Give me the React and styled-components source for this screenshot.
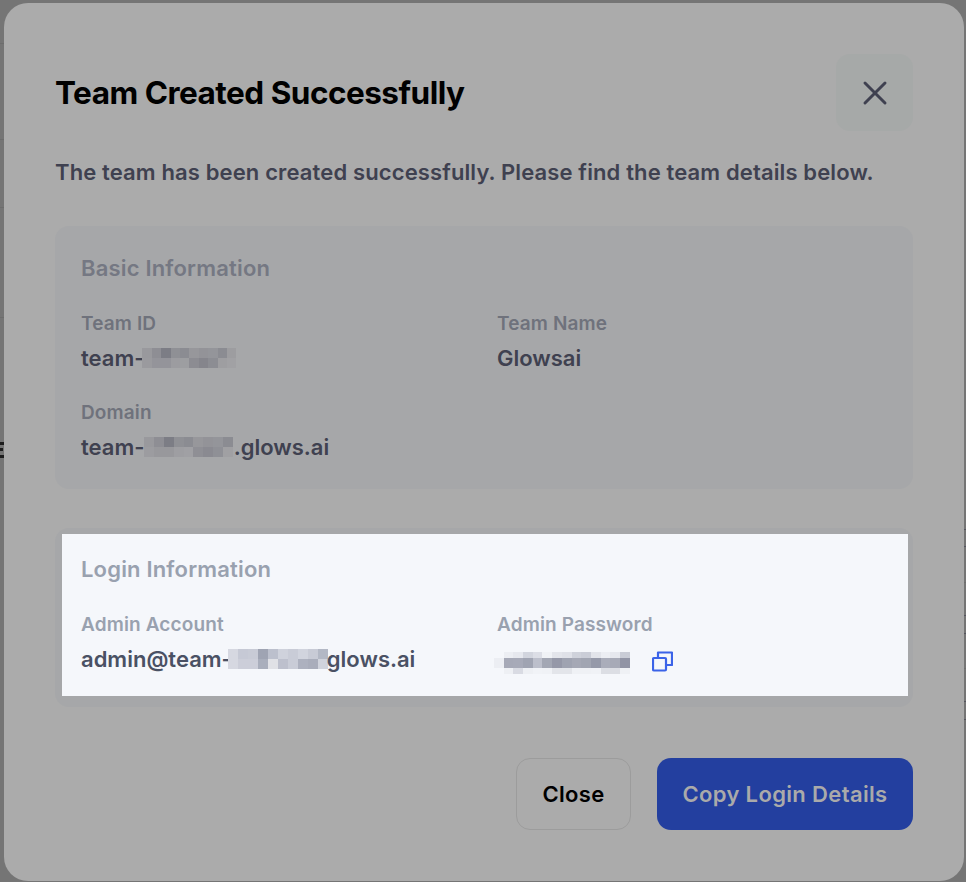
import React from "react";
import styled, { createGlobalStyle } from "styled-components";
import { X } from "lucide-react";

const GlobalStyle = createGlobalStyle`
  html, body {
    margin: 0;
    padding: 0;
    background: #757575;
  }

  * {
    box-sizing: border-box;
  }
`;

const Backdrop = styled.div`
  position: relative;
  width: 966px;
  height: 882px;
  padding: 3px 2px 1px 4px;
  background: #757575;
  overflow: hidden;
  font-family: Inter, "Liberation Sans", sans-serif;
`;

// bits of the page behind the dialog, they only peek out at the window edges
const EdgeMark = styled.i`
  position: absolute;
  top: ${(props) => props.$top}px;
  ${(props) => (props.$right ? "right: 0;" : "left: 0;")}
  width: ${(props) => (props.$right ? 2 : 4)}px;
  height: 1px;
  background: ${(props) => props.$color};
`;

const EdgeGlyph = styled.i`
  position: absolute;
  left: 0;
  top: 442px;
  width: 4px;
  height: 16px;
  border-top: 3px solid #1d1d1d;
  border-bottom: 3px solid #1d1d1d;

  &::after {
    content: "";
    position: absolute;
    left: 0;
    top: 3px;
    width: 3px;
    height: 3px;
    background: #1d1d1d;
  }
`;

const Modal = styled.div`
  position: relative;
  height: 878px;
  padding: 51px;
  background: #ababab;
  border-radius: 24px;
`;

const Header = styled.div`
  display: flex;
  align-items: center;
  justify-content: space-between;
  height: 77px;
`;

const Title = styled.h2`
  margin: 0;
  font-size: 31.5px;
  line-height: 40px;
  font-weight: 700;
  letter-spacing: -0.5px;
  color: #000;
`;

const IconButton = styled.button`
  display: flex;
  align-items: center;
  justify-content: center;
  width: 77px;
  height: 77px;
  padding: 0;
  border: 0;
  border-radius: 14px;
  background: #a6a9a8;
  color: #3f4150;
`;

const Intro = styled.p`
  margin: 26px 0 39px;
  font-size: 22px;
  line-height: 30px;
  font-weight: 600;
  letter-spacing: 0.13px;
  color: #3f4150;
`;

const Card = styled.section`
  padding: 28px 26px 27px;
  border-radius: 14px;
  background: #a6a7a9;
`;

const LoginCard = styled.section`
  margin-top: 39px;
  padding: 6px 5px 11px 7px;
  border-radius: 14px;
  background: #a6a7a9;
`;

const Spotlight = styled.div`
  padding: 21px 21px 22px 19px;
  background: #f5f7fb;
`;

const CardTitle = styled.h3`
  margin: 0;
  font-size: 22px;
  line-height: 28px;
  font-weight: 600;
  letter-spacing: 0.18px;
  color: ${(props) => (props.$bright ? "#99a1af" : "#757883")};
`;

const FieldGrid = styled.div`
  display: grid;
  grid-template-columns: 1fr 1fr;
  column-gap: 26px;
  row-gap: 28px;
  margin-top: 30px;
`;

const Label = styled.div`
  font-size: 19px;
  line-height: 24px;
  font-weight: 600;
  letter-spacing: 0.13px;
  color: ${(props) => (props.$bright ? "#99a1af" : "#6f727c")};
`;

const Value = styled.div`
  display: flex;
  align-items: center;
  height: 30px;
  margin-top: 7px;
  font-size: 22px;
  line-height: 30px;
  font-weight: 600;
  color: ${(props) => (props.$bright ? "#4a5164" : "#3f4150")};
`;

const MosaicGrid = styled.span`
  display: inline-grid;
  flex: none;
  grid-template-columns: repeat(${(props) => props.$cols}, ${(props) => props.$cell}px);
  grid-template-rows: ${(props) => props.$rowSizes};
  margin: ${(props) => props.$margin || 0};
`;

const MosaicCell = styled.span`
  background: ${(props) => props.$color};
`;

const CopyIcon = styled.svg`
  flex: none;
  width: 21px;
  height: 21px;
  margin: 5px 0 0 22px;
  color: #3b63e8;
`;

const Footer = styled.div`
  display: flex;
  justify-content: flex-end;
  gap: 26px;
  margin-top: 51px;
`;

const Button = styled.button`
  height: 72px;
  padding: 0;
  width: ${(props) => props.$width}px;
  border-radius: 14px;
  border: ${(props) => (props.$primary ? "0" : "1px solid #9c9c9c")};
  background: ${(props) => (props.$primary ? "#233f9f" : "transparent")};
  color: ${(props) => (props.$primary ? "#aaaaaa" : "#000")};
  font-family: inherit;
  font-size: 22px;
  font-weight: 600;
  letter-spacing: 0.35px;
`;

const mosaics = {
  teamId: [
    ["#99999d", "#8e8e94", "#7c7d85", "#8f9095", "#8b8c92", "#97979b", "#939398", "#94959a", "#8b8c92", "#9d9da0"],
    ["#9a9a9e", "#94949a", "#94949a", "#9c9ca0", "#9d9ea1", "#8c8c92", "#85858c", "#8c8d93", "#9e9ea1", "#a1a1a4"],
  ],
  domain: [
    ["#99999d", "#8e8e94", "#7c7d85", "#8f9095", "#8b8c92", "#97979b", "#939398", "#94959a", "#8b8c92"],
    ["#9c9ca0", "#98989c", "#98989c", "#9e9ea2", "#a0a0a4", "#8f8f95", "#8a8a91", "#8f9096", "#a0a0a3"],
  ],
  admin: [
    ["#d6d8e1", "#c6c9d5", "#c8cbd6", "#9fa4b3", "#bcc0cd", "#cfd2dc", "#c9ccd7", "#d1d4de", "#c8cbd6", "#b3b8c5"],
    ["#d6d8e1", "#ccced9", "#ccced9", "#a9aebc", "#e0e1e6", "#bdc0cd", "#c9ccd7", "#adb1bf", "#a9adbb", "#d0d3dc"],
  ],
  password: [
    ["#f5f7fb", "#eceef3", "#e6e8ee", "#d2d5de", "#dcdee6", "#f0f2f6", "#e3e5eb", "#dfe1e8", "#cfd2db", "#cacdd7", "#e2e4ea", "#eceef3", "#e6e8ee", "#c9ccd6"],
    ["#eceef3", "#a6a9b7", "#a7aab8", "#a0a4b2", "#bcbfcb", "#a3a7b4", "#9598a8", "#9fa3b1", "#a5a8b5", "#a1a5b2", "#9599a9", "#aaadba", "#a7aab7", "#9194a5"],
    ["#f5f7fb", "#eef0f4", "#d9dbe3", "#eef0f4", "#f1f3f7", "#f0f2f6", "#e3e5ea", "#e3e5ea", "#eff1f5", "#eff1f5", "#f0f2f6", "#dcdee4", "#dcdee4", "#eff1f5"],
  ],
};

const edgeMarks = [
  { top: 43, color: "#6d6d6d" },
  { top: 139, color: "#6d6d6d" },
  { top: 207, color: "#6d6d6d" },
  { top: 317, color: "#6d6d6d" },
  { top: 529, color: "#55555f", right: true },
  { top: 546, color: "#55555f", right: true },
  { top: 582, color: "#6d6d6d", right: true },
  { top: 615, color: "#55555f", right: true },
  { top: 633, color: "#55555f", right: true },
  { top: 668, color: "#6d6d6d", right: true },
  { top: 701, color: "#55555f", right: true },
  { top: 719, color: "#55555f", right: true },
];

const Mosaic = ({ rows, cell = 10, rowSizes = "10px 10px", margin }) => (
  <MosaicGrid $cols={rows[0].length} $cell={cell} $rowSizes={rowSizes} $margin={margin}>
    {rows.flat().map((color, i) => (
      <MosaicCell key={i} $color={color} />
    ))}
  </MosaicGrid>
);

const App = () => {
  return (
    <>
      <GlobalStyle />
      <Backdrop>
        {edgeMarks.map((mark) => (
          <EdgeMark key={mark.top} $top={mark.top} $color={mark.color} $right={mark.right} />
        ))}
        <EdgeGlyph />
        <Modal>
          <Header>
            <Title>Team Created Successfully</Title>
            <IconButton aria-label="Close dialog">
              <X size={40} strokeWidth={1.8} />
            </IconButton>
          </Header>
          <Intro>The team has been created successfully. Please find the team details below.</Intro>

          <Card>
            <CardTitle>Basic Information</CardTitle>
            <FieldGrid>
              <div>
                <Label>Team ID</Label>
                <Value>
                  team-
                  <Mosaic rows={mosaics.teamId} cell={9.4} margin="0 0 0 -2px" />
                </Value>
              </div>
              <div>
                <Label>Team Name</Label>
                <Value>Glowsai</Value>
              </div>
              <div>
                <Label>Domain</Label>
                <Value>
                  team-
                  <Mosaic rows={mosaics.domain} cell={9.8} margin="0 1px 0 0" />
                  .glows.ai
                </Value>
              </div>
            </FieldGrid>
          </Card>

          <LoginCard>
            <Spotlight>
              <CardTitle $bright>Login Information</CardTitle>
              <FieldGrid>
                <div>
                  <Label $bright>Admin Account</Label>
                  <Value $bright>
                    admin@team-
                    <Mosaic rows={mosaics.admin} margin="0 -1px 0 -4px" />
                    glows.ai
                  </Value>
                </div>
                <div>
                  <Label $bright>Admin Password</Label>
                  <Value $bright>
                    <Mosaic rows={mosaics.password} cell={9.7} rowSizes="6px 10px 6px" margin="8px 0 0 -3px" />
                    <CopyIcon viewBox="0 0 21 21" fill="none" stroke="currentColor" strokeWidth="2.2" strokeLinejoin="round">
                      <rect x="1" y="7" width="13" height="12.5" rx="1" />
                      <path d="M6 7V1.5h14v12.5h-6" />
                    </CopyIcon>
                  </Value>
                </div>
              </FieldGrid>
            </Spotlight>
          </LoginCard>

          <Footer>
            <Button $width={115}>Close</Button>
            <Button $primary $width={256}>Copy Login Details</Button>
          </Footer>
        </Modal>
      </Backdrop>
    </>
  );
};

export default App;
